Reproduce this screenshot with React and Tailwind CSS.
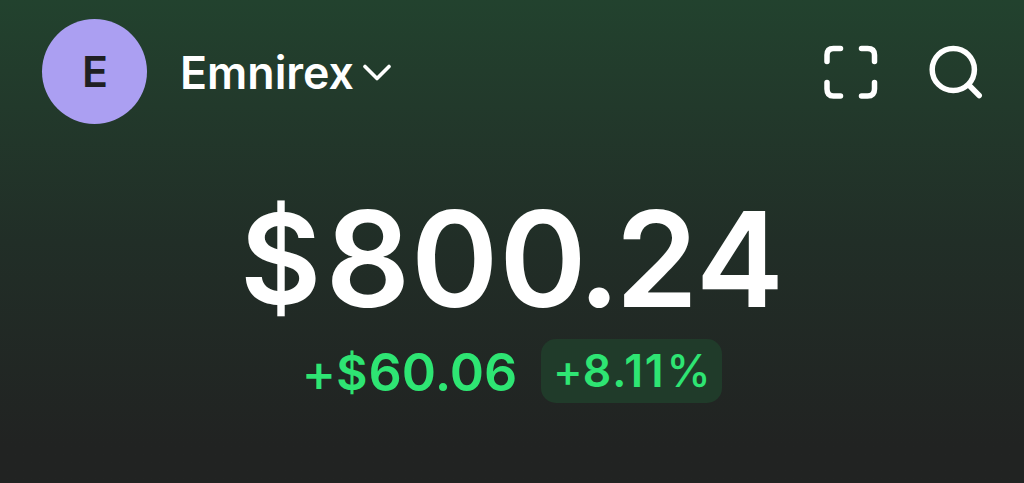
export default function App() {
  return (
    <main className="h-[483px] w-[1024px] overflow-hidden bg-linear-to-b from-[#22422e] via-[#212e27] via-50% to-[#212322] to-92% font-['Inter',sans-serif] text-white">
      <header className="flex h-[143px] items-center pl-[42px] pr-[41px]">
        <div className="flex size-[105px] items-center justify-center rounded-full bg-[#ab9ff2] pl-px text-[43px] font-semibold text-[#1f1f23]">E</div>
        <div className="ml-[33px] flex items-center gap-[8px]">
          <span className="pt-[3px] text-[44.7px] font-semibold leading-none">Emnirex</span>
          <svg className="mt-[3px] h-[18px] w-[30px]" viewBox="0 0 30 18" fill="none" stroke="currentColor" strokeWidth="3.6" strokeLinecap="round" strokeLinejoin="round"><path d="M3 2.5l12 12L27 2.5" /></svg>
        </div>
        <div className="ml-auto flex items-center gap-[51px]">
          <svg className="size-[54px]" viewBox="0 0 54 54" fill="none" stroke="currentColor" strokeWidth="5.5" strokeLinecap="round"><path d="M3 16.5V10Q3 3.5 9.5 3.5H16.5M37.5 3.5H43.5Q50.5 3.5 50.5 10V16.5M50.5 37.5V44Q50.5 51 43.5 51H37.5M16.5 51H9.5Q3 51 3 44V37.5" /></svg>
          <svg className="size-[54px]" viewBox="0 0 54 54" fill="none" stroke="currentColor" strokeWidth="5.5" strokeLinecap="round"><circle cx="24.3" cy="24.5" r="21.1" /><path d="M39.8 40l10.4 10.5" /></svg>
        </div>
      </header>
      <section className="flex flex-col items-center">
        <div className="mt-[51px] flex h-[130px] items-center leading-[130px]">
          <span className="mr-[4px] text-[125px] font-semibold">$</span>
          <span className="text-[132.5px] font-semibold tracking-[0.8px]">80<span className="tracking-[-4.8px]">0.</span><span className="tracking-[-0.2px]">24</span></span>
        </div>
        <div className="mt-[15px] flex items-center gap-[24px] text-[#2ee573]">
          <span className="flex items-center pt-[3px] text-[52px] font-semibold leading-none">
            <span className="font-medium">+</span><span className="mr-px text-[48px]">$</span>60.06
          </span>
          <span className="flex h-[64px] w-[181px] items-center justify-center rounded-[15px] bg-[#203b2a] pt-px text-[44.5px] font-medium">
            <span>+</span>
            <span className="font-semibold tracking-[1.8px]">8.11</span>
            <span className="ml-px">%</span>
          </span>
        </div>
      </section>
    </main>
  );
}
